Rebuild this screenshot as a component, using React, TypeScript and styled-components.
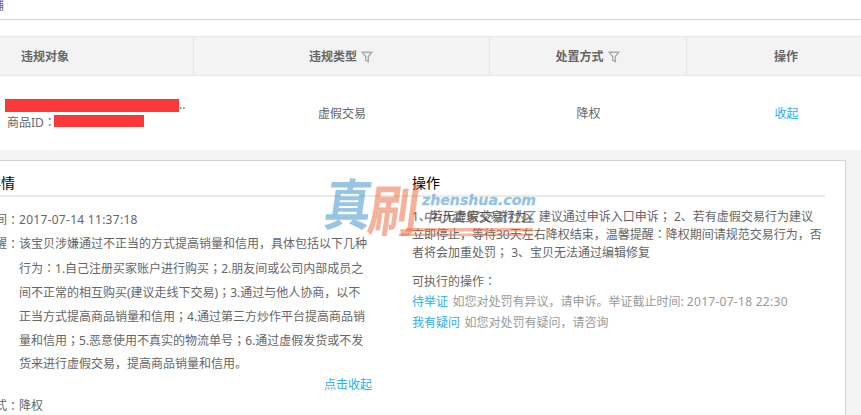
import React from "react";
import styled, { createGlobalStyle } from "styled-components";

const GlobalStyle = createGlobalStyle`
  * {
    box-sizing: border-box;
  }

  body {
    margin: 0;
    overflow: hidden;
    background: #fff;
    color: #666;
    font: 12px/18px "Noto Sans", "Noto Sans CJK SC", sans-serif;
  }
`;

const Page = styled.div`
  position: relative;
  width: 861px;
  height: 415px;
  overflow: hidden;
`;

const ShopBar = styled.div`
  height: 20px;
  line-height: 12px;
  border-bottom: 1px solid #d9d9d9;
  margin-bottom: 16px;
  text-indent: -8px;
`;

const Row = styled.div`
  display: grid;
  grid-template-columns: 194px 296px 197px 199px;
  width: 886px;
`;

const HeadRow = styled(Row)`
  height: 40px;
  background: #f3f3f3;
  border-top: 1px solid #e6e6e6;
  border-bottom: 1px solid #e6e6e6;
`;

const HeadCell = styled.div<{ $inset?: number }>`
  display: flex;
  align-items: center;
  justify-content: center;
  gap: 4px;
  padding-top: 1px;
  padding-right: ${({ $inset = 1 }) => $inset}px;
  border-right: 1px solid #e6e6e6;
  font-weight: 700;
`;

const BodyRow = styled(Row)`
  height: 74px;
`;

const Cell = styled.div`
  display: flex;
  align-items: center;
  justify-content: center;
  padding-top: 2px;
`;

const Item = styled.div`
  padding: 21px 0 0 5px;
`;

const ItemLine = styled.div<{ $indent?: number }>`
  display: flex;
  align-items: center;
  height: 16px;
  padding-left: ${({ $indent = 0 }) => $indent}px;
`;

const Redacted = styled.span<{ $width: number; $height: number }>`
  width: ${({ $width }) => $width}px;
  height: ${({ $height }) => $height}px;
  background: #fd3838;
`;

const ItemId = styled.span`
  width: 47px;
  padding-top: 2px;
  white-space: nowrap;
`;

const Link = styled.a`
  color: #29aef3;
`;

const Expanded = styled.div`
  height: 265px;
  padding: 10px 15px 0 0;
  background: #f3f3f3;
`;

const Panel = styled.div`
  display: grid;
  grid-template-columns: 412px 413px;
  height: 270px;
  background: #fff;
  border: 1px solid #d3d3d3;
  border-left: 0;
`;

const Title = styled.h3`
  height: 36px;
  margin: 0;
  padding-top: 11px;
  border-bottom: 2px solid #eaeaea;
  color: #000;
  font-size: 14px;
  font-weight: 400;
  line-height: 22px;
`;

const DetailTitle = styled(Title)`
  text-indent: -13px;
`;

const Details = styled.div`
  padding-top: 11px;
`;

const Field = styled.div`
  display: grid;
  grid-template-columns: 19px 1fr;
  line-height: 24px;
  white-space: nowrap;
`;

const Label = styled.span`
  display: flex;
  justify-content: flex-end;
  height: 24px;
`;

const Line = styled.div<{ $height: number }>`
  height: ${({ $height }) => $height}px;
`;

const Spaced = styled.span`
  letter-spacing: 0.28px;
`;

const CollapseRow = styled.div`
  height: 18px;
  padding-left: 324px;
  line-height: 18px;
`;

const Advice = styled.div`
  padding-top: 10px;
  white-space: nowrap;
`;

const Actions = styled.div`
  padding-top: 9px;
  line-height: 21px;
  white-space: nowrap;
`;

const Hint = styled.span`
  margin-left: 4.5px;
  color: #999;
`;

const Centered = styled.span`
  font-family: "Noto Sans CJK JP", sans-serif;
`;

const WatermarkSvg = styled.svg`
  position: absolute;
  left: 315px;
  top: 170px;
  pointer-events: none;
`;

// colons and semicolons sit in the middle of their cell
const T = ({ children }: { children: string }) => (
  <>
    {children
      .split(/([：；])/)
      .map((part, i) => (i % 2 ? <Centered key={i}>{part}</Centered> : part))}
  </>
);

const Filter = () => (
  <svg width="12" height="12" viewBox="0 0 12 12" fill="none">
    <path
      d="M1.2 1.2H10.8L7.3 5.6V10.6L4.7 9.4V5.6Z"
      stroke="#aaa"
      strokeWidth="1.4"
    />
  </svg>
);

const Watermark = () => (
  <WatermarkSvg width="230" height="75" viewBox="0 0 230 75">
    <g fontFamily="'Noto Sans CJK SC', sans-serif" fontWeight="700">
      <text
        transform="translate(7 55) skewX(-8) scale(.86 1)"
        fontSize="55"
        fill="#318dc9"
        opacity=".5"
      >
        真
      </text>
      <text
        transform="translate(51 60.5) skewX(-8) scale(.89 1)"
        fontSize="56"
        fill="#ef6537"
        opacity=".5"
      >
        刷
      </text>
    </g>
    <path
      d="M91 58H218V61.5H91ZM84 63.5H218V66H84Z"
      fill="#ef6537"
      opacity=".48"
    />
    <text
      transform="translate(107 35) scale(1.17 1)"
      fontFamily="'DejaVu Sans', sans-serif"
      fontWeight="700"
      fontStyle="italic"
      fontSize="13.5"
      textLength="97.5"
      lengthAdjust="spacingAndGlyphs"
      fill="#318dc9"
      stroke="#318dc9"
      strokeWidth=".3"
      opacity=".52"
    >
      zhenshua.com
    </text>
    <text
      transform="translate(108 51.5) skewX(-8)"
      fontFamily="'Noto Sans CJK SC', sans-serif"
      fontSize="14"
      fontWeight="500"
      textLength="112"
      fill="#333"
      opacity=".6"
    >
      中小卖家交流社区
    </text>
  </WatermarkSvg>
);

const reminder = [
  "该宝贝涉嫌通过不正当的方式提高销量和信用，具体包括以下几种",
  "行为：1.自己注册买家账户进行购买；2.朋友间或公司内部成员之",
  "间不正常的相互购买(建议走线下交易)；3.通过与他人协商，以不",
  "正当方式提高商品销量和信用；4.通过第三方炒作平台提高商品销",
  "量和信用；5.恶意使用不真实的物流单号；6.通过虚假发货或不发",
  "货来进行虚假交易，提高商品销量和信用。",
];

const advice = [
  "1、若无虚假交易行为，建议通过申诉入口申诉； 2、若有虚假交易行为建议",
  "立即停止，等待30天左右降权结束，温馨提醒：降权期间请规范交易行为，否",
  "者将会加重处罚； 3、宝贝无法通过编辑修复",
];

const App = () => (
  <Page>
    <GlobalStyle />
    <ShopBar>铺</ShopBar>
    <HeadRow>
      <HeadCell $inset={103}>违规对象</HeadCell>
      <HeadCell>
        违规类型
        <Filter />
      </HeadCell>
      <HeadCell>
        处置方式
        <Filter />
      </HeadCell>
      <HeadCell $inset={0}>操作</HeadCell>
    </HeadRow>
    <BodyRow>
      <Item>
        <ItemLine>
          <Redacted $width={174} $height={13} />
          ..
        </ItemLine>
        <ItemLine $indent={2}>
          <ItemId>
            <T>商品ID：</T>
          </ItemId>
          <Redacted $width={90} $height={12} />
        </ItemLine>
      </Item>
      <Cell>虚假交易</Cell>
      <Cell>降权</Cell>
      <Cell>
        <Link>收起</Link>
      </Cell>
    </BodyRow>
    <Expanded>
      <Panel>
        <div>
          <DetailTitle>详情</DetailTitle>
          <Details>
            <Field>
              <Label>
                <T>时间：</T>
              </Label>
              <Spaced>2017-07-14 11:37:18</Spaced>
            </Field>
            <Field>
              <Label>
                <T>提醒：</T>
              </Label>
              <div>
                {reminder.map((line) => (
                  <Line key={line} $height={24}>
                    <T>{line}</T>
                  </Line>
                ))}
              </div>
            </Field>
            <CollapseRow>
              <Link>点击收起</Link>
            </CollapseRow>
            <Field>
              <Label>
                <T>方式：</T>
              </Label>
              <span>降权</span>
            </Field>
          </Details>
        </div>
        <div>
          <Title>操作</Title>
          <Advice>
            {advice.map((line) => (
              <Line key={line} $height={18}>
                <T>{line}</T>
              </Line>
            ))}
          </Advice>
          <Actions>
            <Line $height={21}>
              <T>可执行的操作：</T>
            </Line>
            <Line $height={21}>
              <Link>待举证</Link>
              <Hint>
                如您对处罚有异议，请申诉。举证截止时间:{" "}
                <Spaced>2017-07-18 22:30</Spaced>
              </Hint>
            </Line>
            <Line $height={21}>
              <Link>我有疑问</Link>
              <Hint>如您对处罚有疑问，请咨询</Hint>
            </Line>
          </Actions>
        </div>
      </Panel>
    </Expanded>
    <Watermark />
  </Page>
);

export default App;
